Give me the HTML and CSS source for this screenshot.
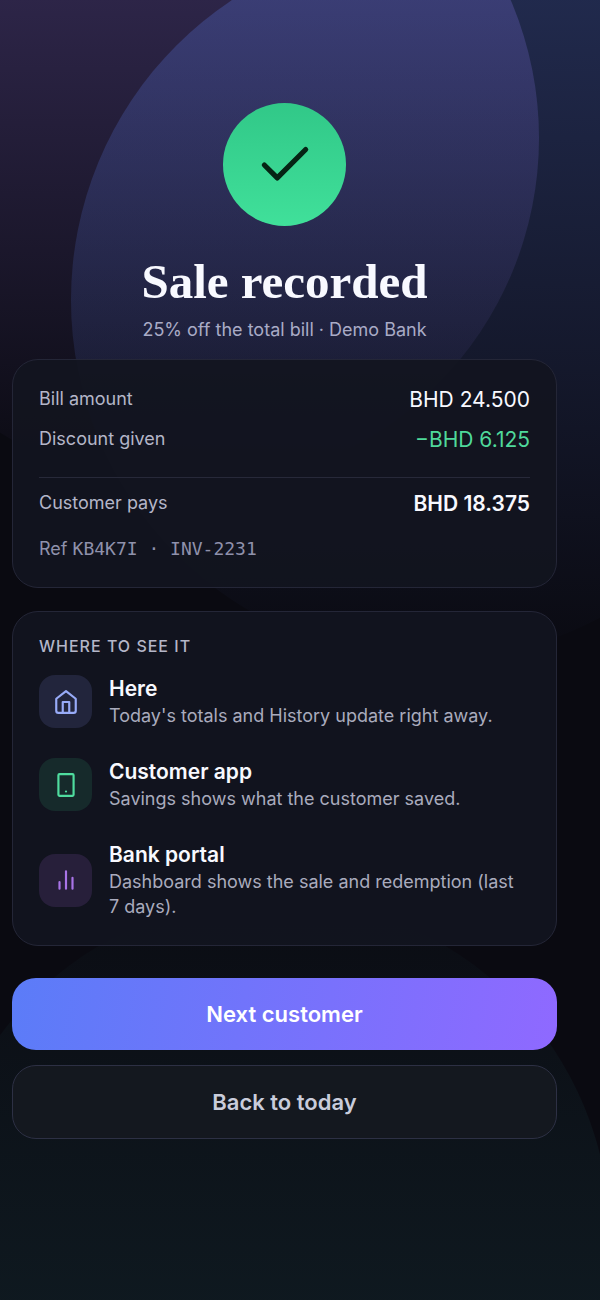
FILE: index.html
```html
<!DOCTYPE html>
<html lang="en">
<head>
    <meta charset="UTF-8">
    <meta name="viewport" content="width=device-width, initial-scale=1.0">
    <title>Sale recorded</title>
    <link rel="stylesheet" href="styles.css">
</head>
<body>
    <div class="page">
        <div class="glow glow-purple"></div>
        <div class="glow glow-blue"></div>
        <div class="glow glow-green"></div>

        <main class="container">
            <header class="hero">
                <div class="hero-badge">
                    <svg viewBox="0 0 24 24" aria-hidden="true"><path d="M20 6 9 17l-5-5"/></svg>
                </div>
                <h1>Sale recorded</h1>
                <p>25% off the total bill · Demo Bank</p>
            </header>

            <section class="card">
                <dl class="summary">
                    <div class="row">
                        <dt>Bill amount</dt>
                        <dd>BHD 24.500</dd>
                    </div>
                    <div class="row">
                        <dt>Discount given</dt>
                        <dd class="discount">−BHD 6.125</dd>
                    </div>
                    <div class="row total">
                        <dt>Customer pays</dt>
                        <dd>BHD 18.375</dd>
                    </div>
                </dl>
                <p class="ref">Ref <span class="code">KB4K7I · INV-2231</span></p>
            </section>

            <section class="card places">
                <h2>Where to see it</h2>
                <ul>
                    <li>
                        <span class="icon icon-blue">
                            <svg viewBox="0 0 24 24" aria-hidden="true">
                                <path d="M3 9l9-7 9 7v11a2 2 0 0 1-2 2H5a2 2 0 0 1-2-2z"/>
                                <path d="M9 22V12h6v10"/>
                            </svg>
                        </span>
                        <div>
                            <h3>Here</h3>
                            <p>Today's totals and History update right away.</p>
                        </div>
                    </li>
                    <li>
                        <span class="icon icon-green">
                            <svg viewBox="0 0 24 24" aria-hidden="true">
                                <rect x="5" y="2" width="14" height="20" rx="1"/>
                                <path d="M12 18h.01"/>
                            </svg>
                        </span>
                        <div>
                            <h3>Customer app</h3>
                            <p>Savings shows what the customer saved.</p>
                        </div>
                    </li>
                    <li>
                        <span class="icon icon-purple">
                            <svg viewBox="0 0 24 24" aria-hidden="true">
                                <path d="M6 20v-6M12 20V4M18 20V10"/>
                            </svg>
                        </span>
                        <div>
                            <h3>Bank portal</h3>
                            <p>Dashboard shows the sale and redemption (last 7&nbsp;days).</p>
                        </div>
                    </li>
                </ul>
            </section>

            <div class="actions">
                <button type="button" class="btn btn-primary">Next customer</button>
                <button type="button" class="btn btn-secondary">Back to today</button>
            </div>
        </main>
    </div>
</body>
</html>
```
FILE: styles.css
```css
* {
    margin: 0;
    padding: 0;
    box-sizing: border-box;
}

body {
    background-color: #0a0a11;
    color: #f8f9ff;
    font-family: Inter, "Liberation Sans", sans-serif;
    font-size: 18px;
    line-height: 25px;
}

.page {
    position: relative;
    min-height: 100vh;
    overflow: hidden;
}

/* Background circles */
.glow {
    position: absolute;
    border-radius: 50%;
}

.glow-purple {
    top: -212px;
    left: -161px;
    width: 700px;
    height: 700px;
    background: linear-gradient(rgba(139, 109, 219, 0.39), rgba(139, 109, 219, 0));
}

.glow-blue {
    top: -60px;
    left: 71px;
    width: 720px;
    height: 720px;
    background: linear-gradient(rgba(92, 124, 232, 0.3), rgba(92, 124, 232, 0));
}

.glow-green {
    bottom: -274px;
    left: -66px;
    width: 676px;
    height: 676px;
    background: linear-gradient(rgba(70, 200, 205, 0.01), rgba(70, 200, 205, 0.12));
}

.container {
    position: relative;
    padding: 103px 43px 40px 12px;
}

.hero {
    display: flex;
    flex-direction: column;
    align-items: center;
    margin-bottom: 17px;
    text-align: center;
}

.hero-badge {
    display: flex;
    align-items: center;
    justify-content: center;
    width: 123px;
    height: 123px;
    margin-bottom: 28px;
    border-radius: 50%;
    background: linear-gradient(#31c888, #40e09a);
}

.hero-badge svg {
    width: 62px;
    height: 62px;
    stroke: #052414;
}

svg {
    fill: none;
    stroke: currentColor;
    stroke-width: 2;
    stroke-linecap: round;
    stroke-linejoin: round;
}

h1 {
    margin-bottom: 7px;
    font-family: "Liberation Serif", serif;
    font-size: 49px;
    font-weight: 700;
    line-height: 56px;
}

.hero p {
    color: #a9abc6;
}

.card {
    margin-bottom: 23px;
    padding: 26px;
    border: 1px solid #242637;
    border-radius: 26px;
    background: rgba(18, 20, 31, 0.93);
}

.summary {
    display: flex;
    flex-direction: column;
    gap: 12px;
}

.row {
    display: flex;
    justify-content: space-between;
}

.row dt {
    color: #b4b6c8;
}

.row dd {
    font-size: 21px;
    line-height: 28px;
}

.row .discount {
    color: #4fd99b;
}

.total {
    margin-top: 11px;
    padding-top: 12px;
    border-top: 1px solid #272939;
}

.total dd {
    font-weight: 600;
}

.ref {
    margin-top: 19px;
    color: #8f91ab;
    line-height: 24px;
}

.code {
    font-family: "DejaVu Sans Mono", monospace;
}

.places {
    margin-bottom: 32px;
}

.places h2 {
    margin-bottom: 20px;
    color: #b4b6c8;
    font-size: 16px;
    font-weight: 500;
    line-height: 17px;
    letter-spacing: 1px;
    text-transform: uppercase;
}

.places ul {
    display: flex;
    flex-direction: column;
    gap: 30px;
    list-style: none;
}

.places li {
    display: flex;
    align-items: center;
    gap: 17px;
}

.places h3 {
    font-size: 21px;
    font-weight: 600;
    line-height: 28px;
}

.places p {
    color: #a9abbd;
}

.icon {
    display: flex;
    flex-shrink: 0;
    align-items: center;
    justify-content: center;
    width: 53px;
    height: 53px;
    border-radius: 16px;
}

.icon svg {
    width: 26px;
    height: 26px;
}

.icon-blue {
    background: #22253c;
    color: #98abf8;
}

.icon-green {
    background: #162a2b;
    color: #4fdd9f;
}

.icon-purple {
    background: #271f3a;
    color: #a974e8;
}

.actions {
    display: flex;
    flex-direction: column;
    gap: 15px;
}

.btn {
    width: 100%;
    padding: 22px;
    border: none;
    border-radius: 24px;
    font-family: inherit;
    font-size: 22px;
    font-weight: 600;
    line-height: 28px;
    cursor: pointer;
}

.btn-primary {
    background: linear-gradient(100deg, #5b7cf8, #8f69ff);
    color: #fff;
}

.btn-secondary {
    border: 1px solid #2d3044;
    background: #14181f;
    color: #c9ccdb;
}
```
